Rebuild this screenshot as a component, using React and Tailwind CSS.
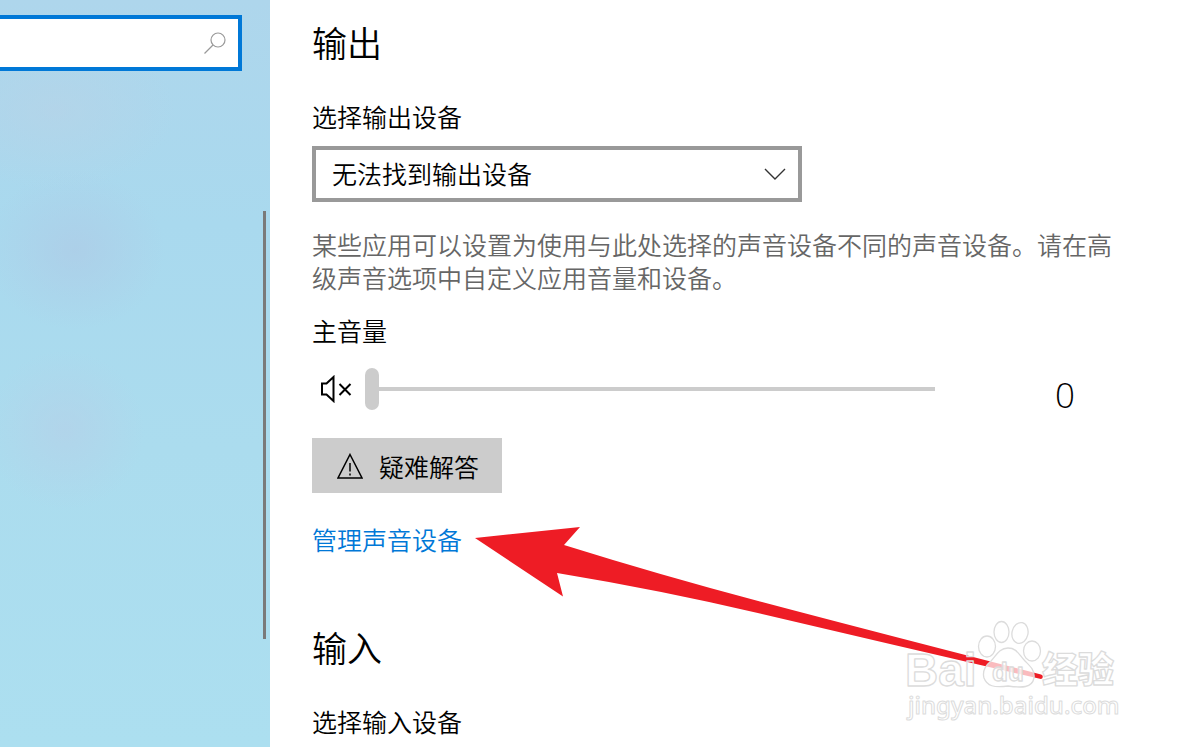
import { useState } from 'react';

function SearchIcon() {
  return (
    <svg viewBox="0 0 22 22" className="h-[22px] w-[22px] shrink-0" fill="none" stroke="#999" strokeWidth="1.2">
      <circle cx="14" cy="8" r="7" />
      <path d="M9 13 0.5 21.500" />
    </svg>
  );
}

function MutedIcon() {
  return (
    <svg viewBox="0 0 32 28" className="h-7 w-8 shrink-0" fill="none" stroke="#000" strokeWidth="2">
      <path d="M13.5 2v24L6.5 19.5H2V8.5h4.5Z" />
      <path d="m19.5 9 11 11M30.500 9l-11 11" />
    </svg>
  );
}

function WarningIcon() {
  return (
    <svg viewBox="0 0 26 26" className="h-[26px] w-[26px] shrink-0" fill="none" stroke="#000" strokeWidth="1.5">
      <path d="M13 1.500 25 25H1Z" />
      <path d="M13 10v8.500M13 20.500v2" />
    </svg>
  );
}

function Sidebar() {
  const [query, setQuery] = useState('');

  return (
    <aside className="flex w-[270px] shrink-0 flex-col bg-[radial-gradient(ellipse_120px_80px_at_55px_110px,#b7d3e7a0_0%,#b7d3e700_100%),radial-gradient(ellipse_90px_80px_at_75px_250px,#aecbe6b0_0%,#aecbe600_100%),radial-gradient(ellipse_80px_80px_at_65px_430px,#b5d0e8a0_0%,#b5d0e800_100%),linear-gradient(#aed6ec,#a9d9ee_30%,#abdcee_60%,#acdff0)] pt-[15px]">
      <div className="flex h-14 w-[242px] items-center border-y-4 border-r-4 border-[#0078d7] bg-white pr-3">
        <input
          type="search"
          aria-label="查找设置"
          value={query}
          onChange={(e) => setQuery(e.target.value)}
          className="h-full min-w-0 flex-1 bg-transparent px-3 text-[25px] outline-none"
        />
        <SearchIcon />
      </div>
      {/* Scroll thumb */}
      <div className="mt-[140px] mr-1 h-[428px] w-[3px] self-end bg-[#7a7a7a]"></div>
    </aside>
  );
}

function Arrow() {
  return (
    <svg
      viewBox="475 527 570 154"
      className="pointer-events-none absolute top-[527px] left-[475px] h-[154px] w-[570px]"
      fill="#ee1c25"
    >
      <path d="M475 538 580 527 564 545Q660 575 760 601.500 860 628 1041 674.500A2.300 2.300 0 0 1 1041 679L890 644 760 613.500Q660 590 557 573L563 596.500Z" />
    </svg>
  );
}

function Watermark() {
  return (
    <svg
      viewBox="900 615 224 112"
      className="pointer-events-none absolute top-[615px] left-[900px] h-28 w-56"
      fill="#fff"
      fillOpacity="0.7"
      stroke="#dcdcdc"
      strokeWidth="1.3"
      strokeLinejoin="round"
    >
      <text x="905" y="686" fontSize="46" fillOpacity="0" className="font-['Liberation_Sans'] font-bold">Bai</text>
      <ellipse cx="987" cy="646.500" rx="8.500" ry="10.500" />
      <ellipse cx="1001.500" cy="632" rx="7.500" ry="10.500" />
      <ellipse cx="1020" cy="633" rx="8" ry="10.500" transform="rotate(12 1020 633)" />
      <ellipse cx="1032" cy="651" rx="8.500" ry="10" />
      <path d="M1008 648C999 648 996 656 991 661 985 666 982 671 984 678 987 686 994 688 1008 686 1022 688 1032 688 1034 678 1035 670 1030 666 1025 661 1019 655 1017 648 1008 648Z" />
      <text x="992" y="681" fontSize="26" className="font-['Liberation_Sans'] font-bold">du</text>
      <text x="1042" y="683" fontSize="36" className="font-['Noto_Sans_CJK_SC'] font-black">经验</text>
      <text x="908" y="714" fontSize="24" strokeWidth="1" className="font-['Noto_Sans'] font-medium">jingyan.baidu.com</text>
    </svg>
  );
}

export default function App() {
  const [volume, setVolume] = useState(0);

  return (
    <div className="relative flex h-screen overflow-hidden bg-white font-['Noto_Sans_CJK_SC',sans-serif] text-[25px] leading-9 font-[350] text-black">
      <Sidebar />

      <main className="min-w-0 flex-1 px-[42px] pt-[18px]">
        {/* Output */}
        <section>
          <h2 className="text-[35px] leading-[48px]">输出</h2>
          <label htmlFor="output" className="mt-8 block">选择输出设备</label>
          <div className="relative mt-3 max-w-[490px]">
            <select
              id="output"
              className="block h-14 w-full appearance-none border-4 border-[#999] bg-white px-4 pb-[2px] outline-none"
            >
              <option>无法找到输出设备</option>
            </select>
            <svg
              viewBox="0 0 22 12"
              className="pointer-events-none absolute top-[22px] right-4 h-3 w-[22px]"
              fill="none"
              stroke="#333"
              strokeWidth="1.4"
            >
              <path d="m1 1 10 10L21 1" />
            </svg>
          </div>
          <p className="mt-[26px] max-w-[800px] leading-[33px] text-[#666]">
            某些应用可以设置为使用与此处选择的声音设备不同的声音设备。请在高级声音选项中自定义应用音量和设备。
          </p>

          <label htmlFor="volume" className="mt-[18px] block">主音量</label>
          <div className="mt-5 flex h-[42px] items-center pl-2">
            <MutedIcon />
            <input
              id="volume"
              type="range"
              min="0"
              max="100"
              value={volume}
              onChange={(e) => setVolume(Number(e.target.value))}
              className="ml-[13px] h-[42px] w-[570px] appearance-none bg-[linear-gradient(#ccc,#ccc)] bg-[length:100%_4px] bg-center bg-no-repeat outline-none [&::-webkit-slider-thumb]:h-[42px] [&::-webkit-slider-thumb]:w-[14px] [&::-webkit-slider-thumb]:appearance-none [&::-webkit-slider-thumb]:rounded-full [&::-webkit-slider-thumb]:bg-[#ccc]"
            />
            <output htmlFor="volume" className="ml-[120px] pt-3 font-['Open_Sans'] text-[35px]">
              {volume}
            </output>
          </div>

          <button type="button" className="mt-7 flex h-[55px] w-[190px] items-center gap-4 bg-[#ccc] pl-[25px]">
            <WarningIcon />
            疑难解答
          </button>
          <a href="#devices" className="mt-7 block w-fit text-[#0078d7]">管理声音设备</a>
        </section>

        {/* Input */}
        <section className="mt-[66px]">
          <h2 className="text-[35px] leading-[48px]">输入</h2>
          <p className="mt-8">选择输入设备</p>
        </section>
      </main>

      <Arrow />
      <Watermark />
    </div>
  );
}
